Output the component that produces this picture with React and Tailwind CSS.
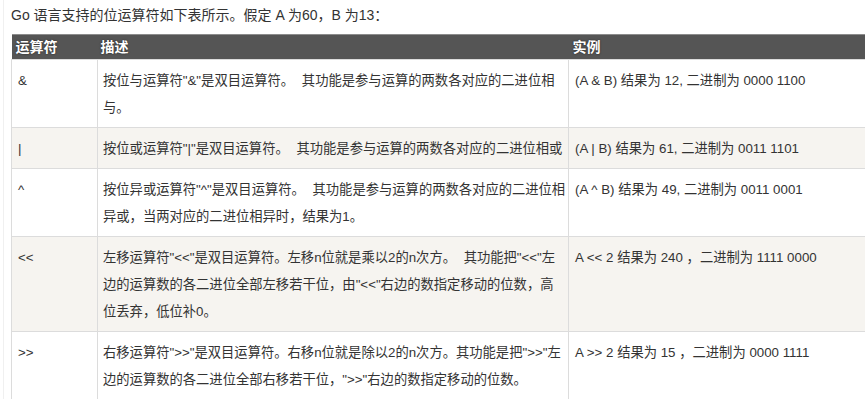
import React from "react";

const rows = [
  {
    op: "&",
    desc: ['按位与运算符"&"是双目运算符。 其功能是参与运算的两数各对应的二进位相', "与。"],
    ex: "(A & B) 结果为 12, 二进制为 0000 1100",
    alt: false,
  },
  {
    op: "|",
    desc: ['按位或运算符"|"是双目运算符。 其功能是参与运算的两数各对应的二进位相或'],
    ex: "(A | B) 结果为 61, 二进制为 0011 1101",
    alt: true,
  },
  {
    op: "^",
    desc: [
      '按位异或运算符"^"是双目运算符。 其功能是参与运算的两数各对应的二进位相',
      "异或，当两对应的二进位相异时，结果为1。",
    ],
    ex: "(A ^ B) 结果为 49, 二进制为 0011 0001",
    alt: false,
  },
  {
    op: "<<",
    desc: [
      '左移运算符"<<"是双目运算符。左移n位就是乘以2的n次方。 其功能把"<<"左',
      '边的运算数的各二进位全部左移若干位，由"<<"右边的数指定移动的位数，高',
      "位丢弃，低位补0。",
    ],
    ex: "A << 2 结果为 240 ，二进制为 1111 0000",
    alt: true,
  },
  {
    op: ">>",
    desc: [
      '右移运算符">>"是双目运算符。右移n位就是除以2的n次方。其功能是把">>"左',
      '边的运算数的各二进位全部右移若干位，">>"右边的数指定移动的位数。',
    ],
    ex: "A >> 2 结果为 15 ，二进制为 0000 1111",
    alt: false,
  },
];

export default function App() {
  return (
    <div
      className="w-[865px] h-[399px] overflow-hidden bg-white text-[#333]"
      style={{ fontFamily: '"Liberation Sans", Arial, "Noto Sans CJK SC", sans-serif' }}
    >
      <div className="ml-[3px] h-full border-l border-[#f0f0f0] pl-[7px]">
        <p className="pt-[3px] mb-[7px] text-[14px] leading-[24px]">
          Go 语言支持的位运算符如下表所示。假定 A 为60，B 为13：
        </p>
        <table className="w-[1000px] table-fixed border-collapse text-[13.3px] leading-[27px]">
          <colgroup>
            <col className="w-[86px]" />
            <col className="w-[471px]" />
            <col />
          </colgroup>
          <thead>
            <tr className="bg-[#555555] border-t border-[#8c8c8c] text-white">
              <th
                className="text-left font-bold text-[14px] leading-[24px] pl-[4px] pr-[4px]"
                style={{ textShadow: "0 0 2px #222" }}
              >
                运算符
              </th>
              <th
                className="text-left font-bold text-[14px] leading-[24px] pl-[3px] pr-[4px]"
                style={{ textShadow: "0 0 2px #222" }}
              >
                描述
              </th>
              <th
                className="text-left font-bold text-[14px] leading-[24px] pl-[4px] pr-[4px]"
                style={{ textShadow: "0 0 2px #222" }}
              >
                实例
              </th>
            </tr>
          </thead>
          <tbody>
            {rows.map((r) => (
              <tr key={r.op} className={r.alt ? "bg-[#f6f4f0]" : "bg-white"}>
                <td className="align-top border border-[#dcdcdc] pl-[6px] pr-[5px] pt-[7px] pb-[6px]">
                  {r.op}
                </td>
                <td className="align-top border border-[#dcdcdc] pl-[5px] pr-0 pt-[7px] pb-[6px] [word-spacing:4px]">
                  {r.desc.map((line, i) => (
                    <div key={i} className="whitespace-nowrap">
                      {line}
                    </div>
                  ))}
                </td>
                <td className="align-top border border-[#dcdcdc] pl-[6px] pr-[5px] pt-[7px] pb-[6px]">
                  {r.ex}
                </td>
              </tr>
            ))}
          </tbody>
        </table>
      </div>
    </div>
  );
}
